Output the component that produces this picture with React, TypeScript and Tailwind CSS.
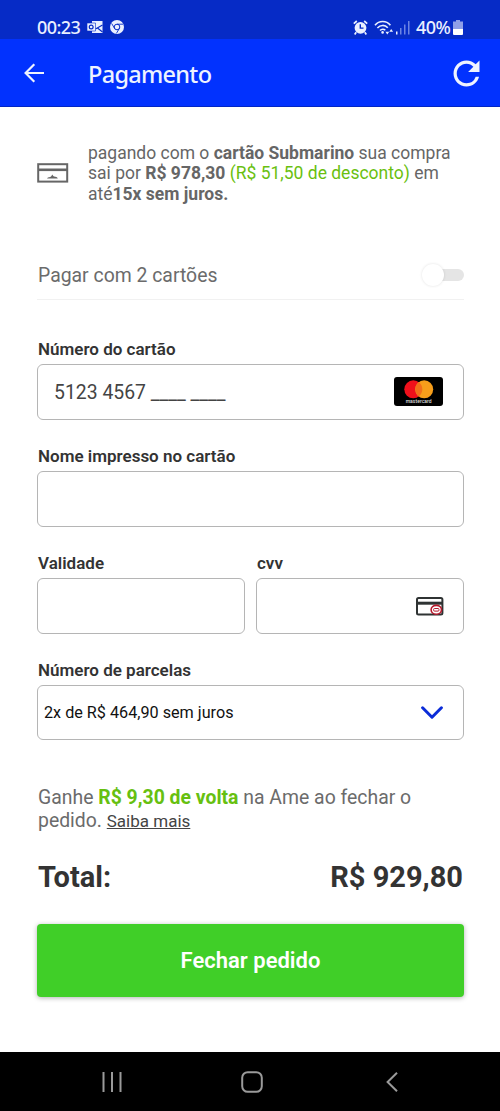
import type { ReactNode } from "react";
import { clsx } from "clsx";

function StatusBar() {
  return (
    <div className="flex h-[39px] items-start justify-between bg-[#062bc6] pr-[37px] pl-[37px] text-[#eaf0ff]">
      <div className="flex items-center pt-4">
        <span className="w-[43px] font-['Noto_Sans'] text-[18px] leading-[22px] font-medium tracking-[-0.6px] whitespace-nowrap">
          00:23
        </span>
        <svg className="ml-[7px]" width="16" height="14" viewBox="0 0 16 14" fill="none">
          <path d="M5 1h10.5v12H5z" fill="currentColor" />
          <path d="M8.5 9 15.5 5M10.5 8l5 4" stroke="#062bc6" strokeWidth="1.1" />
          <path d="M0 3h8.5v8H0z" fill="currentColor" stroke="#062bc6" strokeWidth=".6" />
          <circle cx="4.2" cy="7" r="1.9" stroke="#062bc6" strokeWidth="1.2" />
        </svg>
        <svg className="ml-[7px]" width="14" height="14" viewBox="0 0 14 14" fill="none">
          <circle cx="7" cy="7" r="7" fill="currentColor" />
          <circle cx="7" cy="7" r="2.8" stroke="#062bc6" strokeWidth="1" />
          <path d="M7 4.2h6M4.6 8.4 1.6 3.4M9.4 8.4l-3 5" stroke="#062bc6" strokeWidth=".9" />
        </svg>
      </div>
      <div className="flex items-center pt-4">
        <svg width="15" height="15" viewBox="0 0 15 15" fill="none">
          <circle cx="7.5" cy="7.8" r="5.9" fill="currentColor" />
          <path d="M.8 3.7 3.8 1M14.2 3.7 11.2 1M3.2 12.2l-1.5 2.2M11.8 12.2l1.5 2.2" stroke="currentColor" strokeWidth="1.7" />
          <path d="M7.3 4.3v3.8h3.2" stroke="#062bc6" strokeWidth="1.4" />
        </svg>
        <svg className="ml-[6px]" width="20" height="15" viewBox="0 0 20 15" fill="none">
          <path d="M1 5.2c4-5 11.4-5 15.4 0M3.4 8c3-3.4 7.6-3.4 10.4-.2M6 10.5c1.6-1.7 3.9-1.7 5.3-.2" stroke="currentColor" strokeWidth="1.6" />
          <circle cx="8.6" cy="12.4" r="1.3" fill="currentColor" />
          <path d="m13.3 14.6-1.9-2.8h3.8zM17.2 9l-1.9 2.8h3.8z" fill="currentColor" />
        </svg>
        <svg className="ml-[2px]" width="14" height="15" viewBox="0 0 14 15">
          <path d="M0 11.5h1.5v3H0z" fill="currentColor" />
          <path d="M4 8h1.5v6.5H4zM8 4.5h1.5v10H8zM12 1h1.5v13.5H12z" fill="#6c84e4" />
        </svg>
        <span className="ml-[6px] w-[36px] font-['Noto_Sans'] text-[18px] leading-[22px] font-medium tracking-[-0.6px] whitespace-nowrap">
          40%
        </span>
        <svg className="ml-[1px]" width="10" height="15" viewBox="0 0 10 15">
          <path d="M3 0h4v1.5h3V9H0V1.5h3z" fill="#8f9fe8" />
          <path d="M0 9h10v5a1 1 0 0 1-1 1H1a1 1 0 0 1-1-1z" fill="#fff" />
        </svg>
      </div>
    </div>
  );
}

function Header() {
  return (
    <header className="flex h-[68px] items-center border-b border-[#0226c4] bg-[#0232fe] pt-px pr-[14px] pl-6 text-[#eef3ff]">
      <svg width="21" height="20" viewBox="0 0 21 20" fill="none" stroke="currentColor" strokeWidth="2.2">
        <path d="M20 10H1.8M10.3 1.2 1.6 10l8.7 8.8" />
      </svg>
      <h1 className="ml-[43px] flex-1 pt-0.5 font-['Noto_Sans'] text-[23.5px] leading-7 font-medium tracking-[-0.7px]">
        Pagamento
      </h1>
      <svg width="39" height="39" viewBox="0 0 24 24" fill="currentColor">
        <path d="M17.65 6.35A7.958 7.958 0 0 0 12 4c-4.42 0-7.99 3.58-7.99 8s3.57 8 7.99 8c3.73 0 6.84-2.55 7.73-6h-2.08A5.99 5.99 0 0 1 12 18c-3.31 0-6-2.69-6-6s2.69-6 6-6c1.66 0 3.14.69 4.22 1.78L13 11h7V4l-2.35 2.35z" />
      </svg>
    </header>
  );
}

function Field({ label, className, children }: { label: string; className?: string; children?: ReactNode }) {
  return (
    <div className="flex-1">
      <div className="h-[25px] pl-px text-[17px] leading-5 font-semibold whitespace-nowrap text-[#333]">{label}</div>
      <div
        className={clsx(
          "flex items-center justify-between rounded-[6px] border border-[#b5b5b5] bg-white",
          className
        )}
      >
        {children}
      </div>
    </div>
  );
}

function MastercardLogo() {
  return (
    <svg className="-mt-px" width="49" height="29" viewBox="0 0 49 29">
      <rect width="49" height="29" rx="3" fill="#000" />
      <circle cx="19.3" cy="12.3" r="9" fill="#f0101b" />
      <circle cx="30.2" cy="12.3" r="9" fill="#f79e1b" />
      <path d="M24.75 5.1a9 9 0 0 1 0 14.4 9 9 0 0 1 0-14.4z" fill="#f2701a" />
      <text x="24.7" y="26" textAnchor="middle" fontSize="5" fontWeight="500" fontFamily="Roboto, sans-serif" fill="#ddd" textLength="26">
        mastercard
      </text>
    </svg>
  );
}

export default function App() {
  return (
    <div className="flex h-[1111px] w-[500px] flex-col overflow-hidden bg-white font-['Roboto',sans-serif]">
      <StatusBar />
      <Header />

      <main className="flex-1 pt-9 pr-[36px] pl-[37px]">
        <div className="flex text-[#666]">
          <svg className="mt-5 shrink-0" width="32" height="20" viewBox="0 0 32 20" fill="none">
            <rect x="1.2" y="1.2" width="29" height="17.4" stroke="#666" strokeWidth="2" />
            <path d="M1 6.8h29" stroke="#666" strokeWidth="2.6" />
            <path d="M10 15.6c1-2 3-1.4 4-2.2.6-.6.8-1.4 1.4-2 .6 1 .8 1.8 1.8 2.2 1.6.2 3 .2 3.6 2z" fill="#666" />
          </svg>
          <p className="ml-[19px] text-[17.5px] leading-[20.4px] whitespace-nowrap">
            pagando com o <b>cartão Submarino</b> sua compra
            <br />
            sai por <b>R$ 978,30</b> <span className="text-[#6abf10]">(R$ 51,50 de desconto)</span> em
            <br />
            até<b>15x sem juros.</b>
          </p>
        </div>

        <div className="mt-[58px] flex h-[38px] items-start justify-between border-b border-[#f1f1f1]">
          <span className="pl-px text-[19.4px] leading-7 text-[#6b6b6b]">Pagar com 2 cartões</span>
          <button className="mt-0.5 flex h-[22px] w-[42px] items-center" aria-label="Pagar com 2 cartões">
            <span className="z-10 h-[22px] w-[22px] rounded-full bg-white shadow-[0_0_3px_rgba(0,0,0,0.12)]" />
            <span className="-ml-3 h-3 flex-1 rounded-full bg-[#e5e5e5]" />
          </button>
        </div>

        <div className="mt-[39px] flex flex-col gap-[26px]">
          <Field label="Número do cartão" className="h-14 pr-5 pl-4">
            <span className="text-[19.4px] text-[#444]">5123 4567 ____ ____</span>
            <MastercardLogo />
          </Field>
          <Field label="Nome impresso no cartão" className="h-14" />
          <div className="flex gap-[11px]">
            <Field label="Validade" className="h-14" />
            <Field label="cvv" className="h-14 pr-[19px]">
              <span />
              <svg width="28" height="19" viewBox="0 0 28 19" fill="none">
                <rect x="1" y="1" width="25.4" height="16.4" rx="1.5" stroke="#2f3333" strokeWidth="2" />
                <path d="M1 6.2h25.4" stroke="#2f3333" strokeWidth="3" />
                <ellipse cx="20.3" cy="12.8" rx="5.2" ry="4.4" fill="#fff" stroke="#b5182b" strokeWidth="1.6" />
                <rect x="17.6" y="11.5" width="5.4" height="2.6" rx="1" stroke="#b5182b" strokeWidth="1" />
              </svg>
            </Field>
          </div>
          <Field label="Número de parcelas" className="h-[55px] pr-5 pl-[6px]">
            <span className="text-[16.2px] text-[#111]">2x de R$ 464,90 sem juros</span>
            <svg width="22" height="14" viewBox="0 0 22 14" fill="none">
              <path d="m1.6 1.8 9.4 9.4 9.4-9.4" stroke="#0b2cd8" strokeWidth="3" strokeLinecap="round" strokeLinejoin="round" />
            </svg>
          </Field>
        </div>

        <p className="mt-[46px] pl-px text-[19.4px] leading-[23px] whitespace-nowrap text-[#6b6b6b]">
          Ganhe <b className="text-[#66c010]">R$ 9,30 de volta</b> na Ame ao fechar o<br />
          pedido. <a className="text-[17px] text-[#444] underline">Saiba mais</a>
        </p>

        <div className="mt-[26px] flex justify-between pr-px pl-px text-[29px] leading-9 font-bold text-[#333]">
          <span>Total:</span>
          <span>R$ 929,80</span>
        </div>

        <button className="mt-[29px] flex h-[73px] w-full items-center justify-center rounded-[4px] bg-[#40cf28] text-[22px] font-semibold text-white shadow-[0_1px_5px_rgba(0,0,0,0.3)]">
          Fechar pedido
        </button>
      </main>

      <nav className="flex h-[59px] items-center justify-between bg-black pt-px pr-[102px] pl-[102px] text-[#9a9a9a]">
        <svg width="20" height="20" viewBox="0 0 20 20" stroke="currentColor" strokeWidth="2">
          <path d="M1.5 0v20M10 0v20M18.5 0v20" />
        </svg>
        <svg className="-ml-1" width="22" height="22" viewBox="0 0 22 22" fill="none" stroke="currentColor" strokeWidth="2">
          <rect x="1.2" y="1.2" width="19.6" height="19.6" rx="5.5" />
        </svg>
        <svg width="12" height="20" viewBox="0 0 12 20" fill="none" stroke="currentColor" strokeWidth="2">
          <path d="M11 .8 1.6 10l9.4 9.2" />
        </svg>
      </nav>
    </div>
  );
}
